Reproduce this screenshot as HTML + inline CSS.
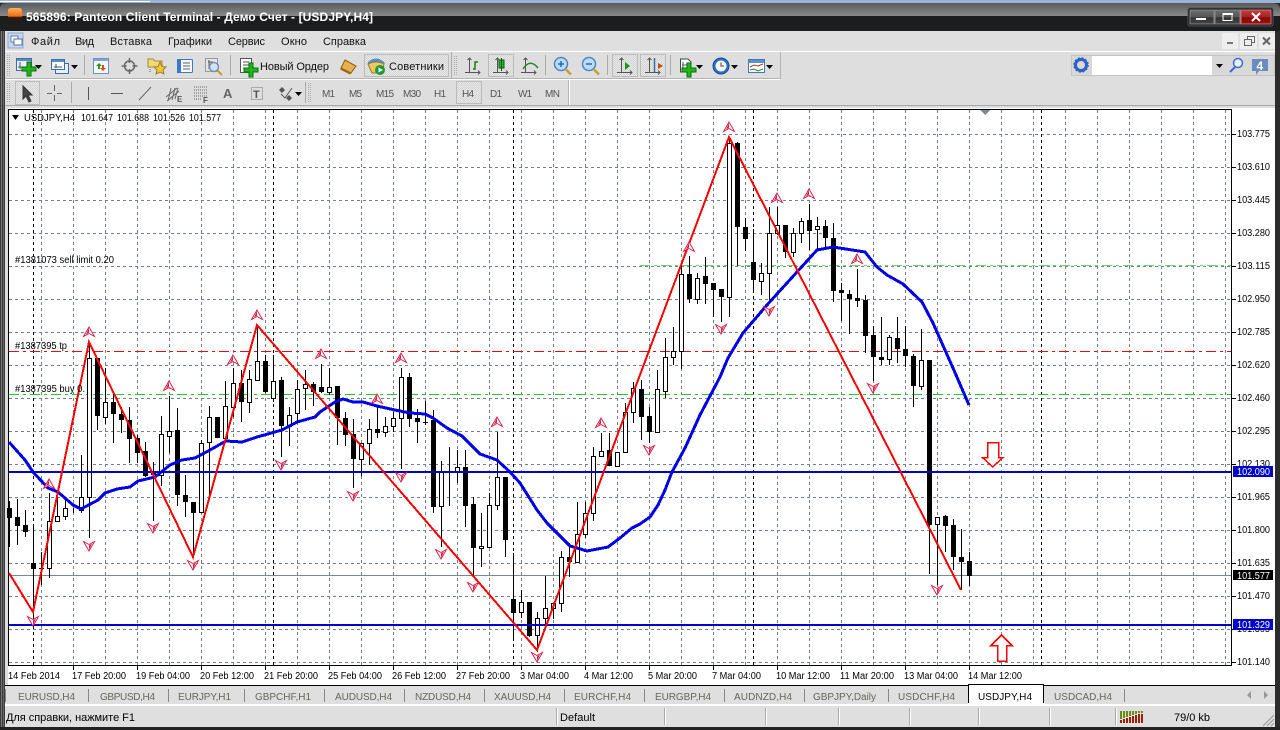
<!DOCTYPE html>
<html lang="ru"><head><meta charset="utf-8"><title>Panteon Client Terminal</title>
<style>
html,body{margin:0;padding:0;background:#000;width:1280px;height:730px;overflow:hidden}
svg{display:block}
text{font-family:"Liberation Sans","Noto Sans CJK JP",sans-serif;font-size:10px;fill:#000}
.m text,text.m{font-size:11px;fill:#111}
.t text{fill:#666659;font-size:10px}
.p text{fill:#555;font-size:10px}
.c{shape-rendering:crispEdges}
</style></head><body>
<svg xmlns="http://www.w3.org/2000/svg" width="1280" height="730" viewBox="0 0 1280 730">
<defs>
<linearGradient id="tg" x1="0" y1="0" x2="0" y2="1"><stop offset="0" stop-color="#5a5a5a"/><stop offset="1" stop-color="#8a8a8a"/></linearGradient>
<linearGradient id="bb" x1="0" y1="0" x2="0" y2="1"><stop offset="0" stop-color="#6e6e6e"/><stop offset=".5" stop-color="#555"/><stop offset=".55" stop-color="#333"/><stop offset="1" stop-color="#444"/></linearGradient>
<linearGradient id="rb" x1="0" y1="0" x2="0" y2="1"><stop offset="0" stop-color="#c04040"/><stop offset=".5" stop-color="#a82020"/><stop offset=".55" stop-color="#860808"/><stop offset="1" stop-color="#a01010"/></linearGradient>
<linearGradient id="oi" x1="0" y1="0" x2="0" y2="1"><stop offset="0" stop-color="#f8b060"/><stop offset=".55" stop-color="#f07010"/><stop offset=".6" stop-color="#3a2010"/><stop offset="1" stop-color="#1a1a1a"/></linearGradient>
<pattern id="pr" width="2" height="2" patternUnits="userSpaceOnUse"><rect width="2" height="2" fill="#e8e8e8"/><rect width="1" height="1" fill="#d4d4d4"/><rect x="1" y="1" width="1" height="1" fill="#d4d4d4"/></pattern>
<g id="u"><path d="M0-5L-5.500 4.500L0 1.500L5.500 4.500Z" fill="#fff" stroke="#dc143c" stroke-width=".9"/><path d="M0-4L-3 2.500L0 .5Z" fill="#dc143c"/></g>
<g id="d"><path d="M0 5L-5.500-4.500L0-1.500L5.500-4.500Z" fill="#fff" stroke="#dc143c" stroke-width=".9"/><path d="M0 4L0-.5L3-2.500Z" fill="#dc143c"/></g>
<path id="plus" d="M-2-7H2V-2H7V2H2V7H-2V2H-7V-2H-2Z" fill="#22b522" stroke="#0a6e0a" stroke-width="1"/>
<path id="ar" d="M0 0H7L3.500 4Z" fill="#000"/>
</defs>
<!-- desktop + frame -->
<rect width="1280" height="730" fill="#2a2a2a"/>
<rect width="1280" height="3" fill="#9ab4d6"/>
<rect x="0" y="1" width="150" height="1" fill="#fff"/>
<path d="M0 16V8Q0 3 7 3H1272Q1280 3 1280 10V16Z" fill="url(#tg)"/>
<rect y="16" width="1280" height="15" fill="#1c1d1f"/>
<rect x="0" y="31" width="5" height="699" fill="#3a3a3a"/>
<rect x="1" y="31" width="1" height="699" fill="#777"/>
<rect x="3" y="31" width="1" height="699" fill="#666"/>
<rect x="1275" y="31" width="5" height="699" fill="#2c2c2c"/>
<!-- title -->
<path d="M8 10Q8 8 12 8H19Q22 8 22 11V20Q22 23 19 23H11Q8 23 8 20Z" fill="url(#oi)"/>
<text x="26" y="21" textLength="347" lengthAdjust="spacing" style="font-size:12px;font-weight:bold;fill:#fff">565896: Panteon Client Terminal - Демо Счет - [USDJPY,H4]</text>
<!-- title buttons -->
<g class="c">
<rect x="1188" y="8" width="85" height="18" rx="2" fill="#111" stroke="#555"/>
<rect x="1190" y="10" width="24" height="14" fill="url(#bb)" stroke="#888"/>
<rect x="1215" y="10" width="25" height="14" fill="url(#bb)" stroke="#888"/>
<rect x="1241" y="10" width="30" height="14" fill="url(#rb)" stroke="#c77"/>
<rect x="1196" y="18" width="10" height="2" fill="#fff"/>
<rect x="1223" y="13.500" width="9" height="7" fill="none" stroke="#fff"/><rect x="1223" y="13" width="10" height="2" fill="#fff"/>
</g>
<path d="M1252 13L1260 21M1260 13L1252 21" stroke="#fff" stroke-width="2"/>
<!-- menu -->
<rect x="5" y="31" width="1270" height="20" fill="#dfdfdf"/>
<rect x="8" y="33" width="15" height="15" fill="#c9d6ee" stroke="#8ea6cc"/>
<rect x="11" y="36" width="7" height="6" fill="#fff" stroke="#5b7fb8"/><rect x="14" y="39" width="8" height="6" fill="#fff" stroke="#4a70a8"/>
<g class="m">
<text x="31" y="45" textLength="29">Файл</text>
<text x="75" y="45" textLength="19">Вид</text>
<text x="110" y="45" textLength="42">Вставка</text>
<text x="168" y="45" textLength="44">Графики</text>
<text x="228" y="45" textLength="37">Сервис</text>
<text x="281" y="45" textLength="26">Окно</text>
<text x="323" y="45" textLength="43">Справка</text>
</g>
<g class="c">
<rect x="1222" y="33" width="16" height="16" fill="#eee"/><rect x="1240" y="33" width="17" height="16" fill="#eee"/><rect x="1259" y="33" width="16" height="16" fill="#eee"/>
<rect x="1227" y="42" width="6" height="2" fill="#777"/>
<rect x="1244.500" y="39.500" width="7" height="6" fill="none" stroke="#666"/><path d="M1247.500 39.500V36.500H1254.500V42.500H1251.500" fill="none" stroke="#666"/>
</g>
<path d="M1263 37.500L1270 44.500M1270 37.500L1263 44.500" stroke="#666" stroke-width="2"/>
<!-- toolbar rows -->
<g class="c">
<rect x="5" y="51" width="1270" height="56" fill="#dedede"/>
<rect x="5" y="51" width="1270" height="1" fill="#fff"/>
<path d="M5 78.500H780M780.500 52V79" stroke="#b4b4b4" fill="none"/>
<rect x="781" y="52" width="494" height="1" fill="#dedede"/>
<rect x="5" y="79" width="775" height="1" fill="#fff"/>
<path d="M568.500 80V105" stroke="#b4b4b4"/><path d="M569.500 80V105" stroke="#fff"/>
<rect x="5" y="105" width="1270" height="1" fill="#a8a8a8"/>
<rect x="5" y="106" width="1270" height="2" fill="#dedede"/>
<path d="M7.500 55V76M9.500 55V76M7.500 83V103M9.500 83V103" stroke="#aaa" stroke-dasharray="1 1"/>
<path d="M84.500 55V75M230.500 55V75M451.500 52V78M545.500 55V75M607.500 55V75M670.500 55V75M71.500 82V103M305.500 82V103" stroke="#aaa"/>
<path d="M454.500 56V75M456.500 56V75M308.500 83V103M310.500 83V103" stroke="#aaa" stroke-dasharray="1 1"/>
<!-- pressed -->
<rect x="364.500" y="54.500" width="84" height="22" fill="url(#pr)" stroke="#bbb"/>
<rect x="488.500" y="54.500" width="25" height="22" fill="url(#pr)" stroke="#bbb"/>
<rect x="612.500" y="54.500" width="25" height="22" fill="url(#pr)" stroke="#bbb"/>
<rect x="640.500" y="54.500" width="25" height="22" fill="url(#pr)" stroke="#bbb"/>
<rect x="15.500" y="81.500" width="24" height="23" fill="url(#pr)" stroke="#bbb"/>
<rect x="456.500" y="81.500" width="25" height="22" fill="url(#pr)" stroke="#bbb"/>
</g>
<!-- toolbar 1 icons -->
<rect x="16.500" y="58.500" width="15" height="12" fill="#e8f0fb" stroke="#3a6ea8"/><rect x="17" y="59" width="14" height="2" fill="#5a8ac8"/>
<path d="M20 62V69M18 67H29" stroke="#555" fill="none"/>
<use href="#plus" x="29" y="69"/><use href="#ar" x="35" y="65"/>
<rect x="55.500" y="63.500" width="13" height="10" fill="#e8f0fb" stroke="#3a6ea8"/>
<rect x="51.500" y="59.500" width="13" height="10" fill="#f4f8ff" stroke="#3a6ea8"/><rect x="52" y="60" width="12" height="2" fill="#5a8ac8"/>
<path d="M54 67H62M56 64V68" stroke="#555" fill="none"/><use href="#ar" x="71" y="65"/>
<rect x="93.500" y="58.500" width="15" height="15" fill="#f6f6f6" stroke="#6b93c4"/><rect x="94" y="59" width="14" height="2" fill="#7ba4d8"/>
<path d="M99 63L96 66H98V69H100V66H102Z" fill="#2a9a2a"/><path d="M103 71L100 68H102V65H104V68H106Z" fill="#d8501a"/>
<circle cx="129.500" cy="66" r="5" fill="none" stroke="#666" stroke-width="1.500"/><path d="M129.500 58V63M129.500 69V74M121.500 66H126.500M132.500 66H137.500" stroke="#666" stroke-width="1.500"/>
<path d="M148 59H153L155 61H162V67H148Z" fill="#f2d878" stroke="#a88a30"/><path d="M160 62L162 66.500L166 67L163 70L164 74L160 72L156 74L157 70L154 67L158 66.500Z" fill="#f0c840" stroke="#a08020"/>
<path d="M150 69V73" stroke="#555" stroke-dasharray="1 1"/>
<rect x="177.500" y="59.500" width="15" height="13" rx="1" fill="#f4f7ff" stroke="#4478b8" stroke-width="1"/><rect x="177" y="59" width="4" height="14" fill="#3a78c8"/><path d="M183 63H190M183 66H190M183 69H190" stroke="#666"/>
<rect x="205.500" y="58.500" width="12" height="13" fill="#e6e6e6" stroke="#999"/><path d="M209 60V69M208 62H213" stroke="#555" fill="none"/>
<circle cx="214" cy="67" r="4.500" fill="#cfe4f8" stroke="#7a90a8" stroke-width="1.500"/><path d="M217.500 70.500L222 75" stroke="#c89a30" stroke-width="2"/>
<rect x="240.500" y="58.500" width="11" height="14" fill="#fff" stroke="#555"/><path d="M243 62H249M243 65H249M243 68H247" stroke="#555"/><use href="#plus" x="251" y="70"/>
<text class="m" x="260" y="70" textLength="69">Новый Ордер</text>
<path d="M345 60L356 66L351 73L341 68Z" fill="#e8b050" stroke="#8a5a10"/><path d="M341 68L351 73L350 74.500L340 69.500Z" fill="#a06818"/>
<path d="M368 62Q376 55 384 62L385 64Q376 60 368 64Z" fill="#4a90d8"/><path d="M368 64Q376 60 384 64L382 73H372Z" fill="#f0c860" stroke="#9a7a20"/><circle cx="380" cy="70" r="5" fill="#1a9a3a"/><path d="M378.500 67.500L383 70L378.500 72.500Z" fill="#fff"/>
<text class="m" x="389" y="70" textLength="55">Советники</text>
<g fill="none" stroke="#555">
<path d="M469.500 58V73M465 72.500H480M467.500 60L469.500 58L471.500 60M478 70.500L480 72.500L478 74.500"/>
<path d="M497.500 58V73M493 72.500H508M495.500 60L497.500 58L499.500 60M506 70.500L508 72.500L506 74.500"/>
<path d="M525.500 58V73M521 72.500H536M523.500 60L525.500 58L527.500 60M534 70.500L536 72.500L534 74.500"/>
<path d="M621.500 58V73M617 72.500H632M619.500 60L621.500 58L623.500 60M630 70.500L632 72.500L630 74.500"/>
<path d="M649.500 58V73M645 72.500H660M647.500 60L649.500 58L651.500 60M658 70.500L660 72.500L658 74.500"/>
</g>
<path d="M473 69H475V62H478" stroke="#1a7a1a" fill="none" stroke-width="1.500"/>
<rect x="499" y="60" width="5" height="8" fill="#2ab82a" stroke="#0a5a0a"/><path d="M501.500 58V71" stroke="#0a5a0a"/>
<path d="M523 69Q530 58 538 68" stroke="#2a8a2a" fill="none" stroke-width="1.500"/>
<path d="M625 62L630 66L625 70Z" fill="#1a9a1a"/>
<path d="M654.500 58V72" stroke="#3a6ea8" stroke-width="1.500"/><path d="M663 66L658 63V69Z" fill="#c84a10"/>
<circle cx="561" cy="64" r="6.500" fill="#bcdcf6" stroke="#4a86c8" stroke-width="1.500"/><path d="M565.500 69L571 74.500" stroke="#c8a030" stroke-width="2.500"/><path d="M558 64H564M561 61V67" stroke="#2a68b0" stroke-width="1.500"/>
<circle cx="589" cy="64" r="6.500" fill="#bcdcf6" stroke="#4a86c8" stroke-width="1.500"/><path d="M593.500 69L599 74.500" stroke="#c8a030" stroke-width="2.500"/><path d="M586 64H592" stroke="#2a68b0" stroke-width="1.500"/>
<path d="M680.500 59H688L691 62V72H680.500Z" fill="#fff" stroke="#444"/><path d="M683 62V69M682 65H688" stroke="#555"/><use href="#plus" x="689" y="70"/><use href="#ar" x="696" y="65"/>
<circle cx="721" cy="66" r="8" fill="#2a6ec8" stroke="#1a4a90"/><circle cx="721" cy="66" r="5.500" fill="#f4f4f4"/><path d="M721 62.500V66H724" stroke="#444" fill="none"/><use href="#ar" x="731" y="65"/>
<rect x="748.500" y="59.500" width="16" height="13" fill="#fff" stroke="#4478b8"/><rect x="749" y="60" width="15" height="3" fill="#5a90d0"/><path d="M750 67L754 65L758 66L763 64" stroke="#a83a1a" fill="none"/><path d="M750 70L754 69L758 71L763 69" stroke="#2a8a2a" fill="none"/><use href="#ar" x="766" y="65"/>
<!-- right search -->
<g class="c">
<rect x="1071.500" y="55.500" width="203" height="20" fill="#d8d8d8" stroke="#c4c4c4"/>
<rect x="1092" y="56" width="120" height="19" fill="#fff"/>
</g>
<circle cx="1081" cy="65" r="5.500" fill="none" stroke="#2a62c8" stroke-width="3"/><circle cx="1081" cy="65" r="7" fill="none" stroke="#2a62c8" stroke-width="1.500" stroke-dasharray="2 1.700"/>
<use href="#ar" x="1216" y="64"/>
<circle cx="1238" cy="63" r="4.500" fill="#e8f0fb" stroke="#3a6ec8" stroke-width="1.500"/><path d="M1235 67L1230 72" stroke="#3a6ec8" stroke-width="2"/>
<path d="M1252 59H1268V71H1259L1256 75V71H1252Z" fill="#6a8cc0"/><text x="1256.500" y="70" style="font-size:12px;font-weight:bold;fill:#fff">4</text>
<!-- toolbar 2 icons -->
<path d="M23 86V99L26 96L29 102L31 101L28 95H32Z" fill="#444" stroke="#333"/>
<g fill="none" stroke="#666" class="c"><path d="M54.500 85V91M54.500 95V101M47 93.500H52M57 93.500H62"/><path d="M88.500 87V100" stroke="#555"/><path d="M111 93.500H123" stroke="#555"/></g>
<path d="M139 100L151 87" stroke="#666" fill="none"/>
<path d="M166 97L177 88M167 101L179 91M171 88L168 101M175 88L172 100M178 88L175 99" stroke="#666" fill="none"/>
<text x="177" y="102" style="font-size:8px;font-weight:bold;fill:#555">E</text>
<path d="M194 87H207M194 90H207M194 93H207M194 96H207M194 99H201" stroke="#666" stroke-dasharray="1 1" fill="none"/>
<text x="203" y="103" style="font-size:8px;font-weight:bold;fill:#555">F</text>
<text x="223" y="98" style="font-size:13px;font-weight:bold;fill:#666">A</text>
<rect x="251.500" y="87.500" width="11" height="12" fill="none" stroke="#777" stroke-dasharray="1 1"/><text x="253" y="98" style="font-size:11px;font-weight:bold;fill:#555">T</text>
<path d="M282 87L285 90L282 93L279 90ZM289 95L292 98L289 101L286 98Z" fill="#555"/><path d="M281 94L285 98L292 88" stroke="#555" fill="none"/><use href="#ar" x="295" y="92"/>
<g class="p">
<text x="322" y="97" textLength="13">M1</text><text x="349" y="97" textLength="13">M5</text><text x="376" y="97" textLength="18">M15</text><text x="403" y="97" textLength="18">M30</text><text x="434" y="97" textLength="12">H1</text><text x="462" y="97" textLength="12">H4</text><text x="490" y="97" textLength="12">D1</text><text x="518" y="97" textLength="14">W1</text><text x="545" y="97" textLength="15">MN</text>
</g>
<!-- chart bg -->
<g class="c">
<rect x="5" y="107" width="3" height="578" fill="#dedede"/>
<rect x="8" y="108" width="1267" height="577" fill="#fff"/>
<path d="M8 109.500H1232M8.500 109V666M8 665.500H1232M1231.500 109V666" stroke="#000" fill="none"/>
<path d="M9 134.500H1231M9 167.500H1231M9 200.500H1231M9 233.500H1231M9 266.500H1231M9 299.500H1231M9 332.500H1231M9 365.500H1231M9 398.500H1231M9 431.500H1231M9 464.500H1231M9 497.500H1231M9 530.500H1231M9 563.500H1231M9 596.500H1231M9 629.500H1231M9 662.500H1231" stroke="#708090" stroke-dasharray="3 3" fill="none"/>
<path d="M41.500 110V665M73.500 110V665M105.500 110V665M137.500 110V665M169.500 110V665M201.500 110V665M233.500 110V665M265.500 110V665M297.500 110V665M329.500 110V665M361.500 110V665M393.500 110V665M425.500 110V665M457.500 110V665M489.500 110V665M521.500 110V665M553.500 110V665M585.500 110V665M617.500 110V665M649.500 110V665M681.500 110V665M713.500 110V665M745.500 110V665M777.500 110V665M809.500 110V665M841.500 110V665M873.500 110V665M905.500 110V665M937.500 110V665M969.500 110V665M1001.500 110V665M1033.500 110V665M1065.500 110V665M1097.500 110V665M1129.500 110V665M1161.500 110V665M1193.500 110V665M1225.500 110V665" stroke="#708090" stroke-dasharray="3 3" fill="none"/>
<path d="M33.500 110V665M273.500 110V665M513.500 110V665M753.500 110V665M1041.500 110V665" stroke="#000" stroke-dasharray="3 3" fill="none"/>
<path d="M1232 134.500H1236M1232 167.500H1236M1232 200.500H1236M1232 233.500H1236M1232 266.500H1236M1232 299.500H1236M1232 332.500H1236M1232 365.500H1236M1232 398.500H1236M1232 431.500H1236M1232 464.500H1236M1232 497.500H1236M1232 530.500H1236M1232 563.500H1236M1232 596.500H1236M1232 629.500H1236M1232 662.500H1236" stroke="#000"/>
<path d="M73.500 666V670M137.500 666V670M201.500 666V670M265.500 666V670M329.500 666V670M393.500 666V670M457.500 666V670M521.500 666V670M585.500 666V670M649.500 666V670M713.500 666V670M777.500 666V670M841.500 666V670M905.500 666V670M969.500 666V670" stroke="#000"/>
<path d="M9 351.500H1231" stroke="#e01010" stroke-dasharray="10 4 3 4"/>
<path d="M9 394.500H1231" stroke="#22cc22" stroke-dasharray="10 4 3 4"/>
<path d="M640 265.500H1231" stroke="#22cc22" stroke-dasharray="10 4 3 4" opacity=".7"/>
<path d="M9 575.500H1231" stroke="#778899"/>
<path d="M980 110H990L985 115Z" fill="#778899"/>
<!-- wicks -->
<path stroke="#000" fill="none" d="M9.500 501V547M17.500 499V545M25.500 510V537M33.500 527V620M41.500 552V585M49.500 493V578M57.500 497V522M65.500 497V520M73.500 508V513M81.500 455V513M89.500 342V538M97.500 358V430M105.500 368V424M113.500 392V443M121.500 407V433M129.500 407V463M137.500 435V463M145.500 442V477M153.500 462V521M161.500 416V486M169.500 396V453M177.500 408V506M185.500 475V517M193.500 502V557M201.500 440V512M209.500 406V495M217.500 417V438M225.500 381V442M233.500 368V417M241.500 370V422M249.500 370V413M257.500 325V380M265.500 355V393M273.500 355V402M281.500 377V457M289.500 407V446M297.500 380V422M305.500 370V410M313.500 382V406M321.500 364V393M329.500 368V395M337.500 386V445M345.500 412V446M353.500 419V488M361.500 443V476M369.500 419V465M377.500 405V438M385.500 417V437M393.500 412V432M401.500 368V469M409.500 373V427M417.500 409V443M425.500 401V425M433.500 410V513M441.500 461V547M449.500 447V506M457.500 450V483M465.500 450V527M473.500 497V575M481.500 513V567M489.500 493V547M497.500 432V510M505.500 477V557M513.500 553V640M521.500 590V618M529.500 602V637M537.500 612V652M545.500 576V627M553.500 603V619M561.500 551V612M569.500 543V577M577.500 502V562M585.500 502V538M593.500 447V521M601.500 433V456M609.500 433V466M617.500 452V467M625.500 403V453M633.500 382V423M641.500 380V440M649.500 407V443M657.500 370V432M665.500 338V398M673.500 327V365M681.500 265V369M689.500 256V303M697.500 273V304M705.500 257V304M713.500 283V317M721.500 289V322M729.500 138V317M737.500 142V266M745.500 218V251M753.500 229V292M761.500 263V295M769.500 207V301M777.500 207V235M785.500 225V258M793.500 228V257M801.500 218V243M809.500 204V250M817.500 217V249M825.500 220V247M833.500 223V302M841.500 283V321M849.500 290V334M857.500 269V307M865.500 295V353M873.500 326V381M881.500 317V365M889.500 335V365M897.500 317V363M905.500 326V367M913.500 354V407M921.500 329V390M929.500 360V574M937.500 517V585M945.500 515V552M953.500 519V570M961.500 529V590M969.500 552V586"/>
<!-- white bodies -->
<path fill="#fff" stroke="#000" d="M47.500 521.500h4V568.500h-4zM55.500 516.500h4V521.500h-4zM63.500 508.500h4V516.500h-4zM79.500 497.500h4V510.500h-4zM87.500 358.500h4V497.500h-4zM103.500 402.500h4V417.500h-4zM159.500 434.500h4V475.500h-4zM167.500 431.500h4V436.500h-4zM199.500 443.500h4V512.500h-4zM207.500 417.500h4V442.500h-4zM223.500 406.500h4V438.500h-4zM231.500 383.500h4V407.500h-4zM247.500 379.500h4V402.500h-4zM255.500 361.500h4V380.500h-4zM271.500 381.500h4V398.500h-4zM287.500 415.500h4V426.500h-4zM295.500 389.500h4V413.500h-4zM303.500 384.500h4V388.500h-4zM327.500 387.500h4V392.500h-4zM359.500 443.500h4V459.500h-4zM367.500 429.500h4V443.500h-4zM383.500 426.500h4V432.500h-4zM391.500 418.500h4V426.500h-4zM399.500 377.500h4V418.500h-4zM439.500 472.500h4V506.500h-4zM455.500 467.500h4V471.500h-4zM479.500 546.500h4V548.500h-4zM487.500 505.500h4V547.500h-4zM495.500 477.500h4V505.500h-4zM519.500 602.500h4V612.500h-4zM535.500 618.500h4V635.500h-4zM543.500 608.500h4V618.500h-4zM551.500 603.500h4V608.500h-4zM559.500 557.500h4V603.500h-4zM575.500 534.500h4V562.500h-4zM583.500 513.500h4V534.500h-4zM591.500 456.500h4V513.500h-4zM599.500 451.500h4V456.500h-4zM615.500 452.500h4V466.500h-4zM623.500 412.500h4V452.500h-4zM631.500 388.500h4V412.500h-4zM655.500 389.500h4V432.500h-4zM663.500 357.500h4V391.500h-4zM671.500 351.500h4V357.500h-4zM679.500 274.500h4V351.500h-4zM695.500 278.500h4V299.500h-4zM727.500 143.500h4V297.500h-4zM759.500 273.500h4V281.500h-4zM767.500 233.500h4V273.500h-4zM775.500 225.500h4V233.500h-4zM791.500 233.500h4V252.500h-4zM799.500 221.500h4V233.500h-4zM815.500 226.500h4V229.500h-4zM887.500 337.500h4V359.500h-4zM919.500 360.500h4V386.500h-4zM935.500 517.500h4V524.500h-4z"/>
<!-- black bodies -->
<path fill="#000" d="M7 508h5V518h-5zM15 517h5V526h-5zM23 525h5V532h-5zM31 563h5V569h-5zM39 568h5V569h-5zM95 358h5V416h-5zM111 402h5V414h-5zM119 414h5V420h-5zM127 420h5V439h-5zM135 438h5V453h-5zM143 451h5V476h-5zM151 472h5V475h-5zM175 430h5V495h-5zM183 495h5V502h-5zM191 502h5V513h-5zM215 417h5V438h-5zM239 383h5V402h-5zM263 361h5V392h-5zM279 380h5V426h-5zM311 384h5V392h-5zM319 387h5V392h-5zM335 386h5V418h-5zM343 418h5V435h-5zM351 434h5V459h-5zM375 429h5V433h-5zM407 377h5V419h-5zM415 418h5V422h-5zM423 422h5V423h-5zM431 420h5V507h-5zM463 467h5V506h-5zM471 504h5V548h-5zM503 477h5V540h-5zM511 599h5V613h-5zM527 602h5V636h-5zM567 557h5V562h-5zM607 450h5V466h-5zM639 389h5V417h-5zM647 416h5V432h-5zM687 274h5V299h-5zM703 276h5V284h-5zM711 283h5V290h-5zM719 289h5V297h-5zM735 143h5V227h-5zM743 227h5V239h-5zM751 262h5V280h-5zM783 225h5V252h-5zM807 220h5V231h-5zM823 226h5V238h-5zM831 238h5V291h-5zM839 290h5V293h-5zM847 294h5V299h-5zM855 298h5V301h-5zM863 300h5V336h-5zM871 335h5V357h-5zM879 357h5V360h-5zM895 338h5V349h-5zM903 349h5V356h-5zM911 356h5V386h-5zM927 360h5V525h-5zM943 516h5V526h-5zM951 525h5V557h-5zM959 557h5V562h-5zM967 561h5V576h-5z"/>
<!-- horizontal blue -->
<rect x="9" y="471" width="1222" height="2" fill="#0000cd"/>
<rect x="9" y="624" width="1222" height="2" fill="#0000cd"/>
<!-- arrows big -->
<path d="M987.500 442.500H998.500V457.500H1003L992.700 467L982.500 457.500H987.500Z" fill="#fff" stroke="#f00" stroke-width="1.500"/>
<path d="M997.500 661H1006.500V645.500H1012L1001.500 635L991 645.500H997.500Z" fill="#fff" stroke="#f00" stroke-width="1.500"/>
<!-- MA -->
<path fill="none" stroke="#0000e6" stroke-width="3" stroke-linejoin="round" d="M9 442L25 460L33 472L48 488L58 492L73 505L81 509L98 500L105 493L117 489L130 487L138 481L155 477L170 465L182 460L195 458L210 450L226 441L242 442L257 437L282 430L297 422L315 417L320 412L335 402L343 399L353 402L363 402L377 406L395 410L410 413L425 414L433 418L447 428L462 436L480 454L497 460L510 472L520 483L537 510L547 523L570 546L587 551L608 547L620 538L632 528L640 524L650 517L658 505L665 490L672 472L685 448L700 415L720 377L728 358L743 333L767 305L787 283L797 272L817 250L833 247L865 252L877 267L887 275L903 284L922 302L933 323L953 368L969 405"/>
<!-- zigzag -->
<path fill="none" stroke="#f00" stroke-width="2" stroke-linejoin="miter" d="M9 573L33 612L89 342L193 557L257 325L537 650L729 137L961 590"/>
</g>
<!-- fractals -->
<use href="#u" x="89" y="332"/><use href="#u" x="49" y="484"/><use href="#u" x="169" y="386"/><use href="#u" x="233" y="360"/><use href="#u" x="257" y="315"/><use href="#u" x="321" y="354"/><use href="#u" x="401" y="358"/><use href="#u" x="377" y="399"/><use href="#u" x="497" y="422"/><use href="#u" x="601" y="423"/><use href="#u" x="729" y="127"/><use href="#u" x="689" y="247"/><use href="#u" x="777" y="198"/><use href="#u" x="809" y="194"/><use href="#u" x="857" y="259"/>
<use href="#d" x="33" y="621"/><use href="#d" x="89" y="546"/><use href="#d" x="153" y="528"/><use href="#d" x="193" y="565"/><use href="#d" x="281" y="465"/><use href="#d" x="353" y="496"/><use href="#d" x="401" y="477"/><use href="#d" x="441" y="554"/><use href="#d" x="473" y="587"/><use href="#d" x="537" y="657"/><use href="#d" x="649" y="450"/><use href="#d" x="721" y="329"/><use href="#d" x="769" y="311"/><use href="#d" x="873" y="388"/><use href="#d" x="937" y="590"/>
<!-- chart header -->
<path d="M12 115H19L15.500 120Z" fill="#000"/>
<text x="24" y="121" textLength="51" lengthAdjust="spacingAndGlyphs">USDJPY,H4</text>
<text x="81" y="121" textLength="32" lengthAdjust="spacingAndGlyphs">101.647</text><text x="117" y="121" textLength="32" lengthAdjust="spacingAndGlyphs">101.688</text><text x="153" y="121" textLength="32" lengthAdjust="spacingAndGlyphs">101.526</text><text x="189" y="121" textLength="32" lengthAdjust="spacingAndGlyphs">101.577</text>
<text x="15" y="263" textLength="99" lengthAdjust="spacingAndGlyphs">#1381073 sell limit 0.20</text>
<text x="15" y="349" textLength="52" lengthAdjust="spacingAndGlyphs">#1387395 tp</text>
<text x="15" y="392" textLength="70" lengthAdjust="spacingAndGlyphs">#1387395 buy 0.</text>
<!-- price axis -->
<g>
<text x="1237" y="137" textLength="33" lengthAdjust="spacingAndGlyphs">103.775</text><text x="1237" y="170" textLength="33" lengthAdjust="spacingAndGlyphs">103.610</text><text x="1237" y="203" textLength="33" lengthAdjust="spacingAndGlyphs">103.445</text><text x="1237" y="236" textLength="33" lengthAdjust="spacingAndGlyphs">103.280</text><text x="1237" y="269" textLength="33" lengthAdjust="spacingAndGlyphs">103.115</text><text x="1237" y="302" textLength="33" lengthAdjust="spacingAndGlyphs">102.950</text><text x="1237" y="335" textLength="33" lengthAdjust="spacingAndGlyphs">102.785</text><text x="1237" y="368" textLength="33" lengthAdjust="spacingAndGlyphs">102.620</text><text x="1237" y="401" textLength="33" lengthAdjust="spacingAndGlyphs">102.460</text><text x="1237" y="434" textLength="33" lengthAdjust="spacingAndGlyphs">102.295</text><text x="1237" y="467" textLength="33" lengthAdjust="spacingAndGlyphs">102.130</text><text x="1237" y="500" textLength="33" lengthAdjust="spacingAndGlyphs">101.965</text><text x="1237" y="533" textLength="33" lengthAdjust="spacingAndGlyphs">101.800</text><text x="1237" y="566" textLength="33" lengthAdjust="spacingAndGlyphs">101.635</text><text x="1237" y="599" textLength="33" lengthAdjust="spacingAndGlyphs">101.470</text><text x="1237" y="632" textLength="33" lengthAdjust="spacingAndGlyphs">101.305</text><text x="1237" y="665" textLength="33" lengthAdjust="spacingAndGlyphs">101.140</text>
</g>
<rect x="1233" y="466" width="40" height="11" fill="#0000cd" class="c"/><text x="1237" y="475" textLength="33" lengthAdjust="spacingAndGlyphs" style="fill:#fff">102.090</text>
<rect x="1233" y="570" width="40" height="10" fill="#000" class="c"/><text x="1237" y="579" textLength="33" lengthAdjust="spacingAndGlyphs" style="fill:#fff">101.577</text>
<rect x="1233" y="619" width="40" height="11" fill="#0000cd" class="c"/><text x="1237" y="628" textLength="33" lengthAdjust="spacingAndGlyphs" style="fill:#fff">101.329</text>
<!-- time axis -->
<g>
<text x="8" y="679" textLength="52" lengthAdjust="spacingAndGlyphs">14 Feb 2014</text><text x="72" y="679" textLength="54" lengthAdjust="spacingAndGlyphs">17 Feb 20:00</text><text x="136" y="679" textLength="54" lengthAdjust="spacingAndGlyphs">19 Feb 04:00</text><text x="200" y="679" textLength="54" lengthAdjust="spacingAndGlyphs">20 Feb 12:00</text><text x="264" y="679" textLength="54" lengthAdjust="spacingAndGlyphs">21 Feb 20:00</text><text x="328" y="679" textLength="54" lengthAdjust="spacingAndGlyphs">25 Feb 04:00</text><text x="392" y="679" textLength="54" lengthAdjust="spacingAndGlyphs">26 Feb 12:00</text><text x="456" y="679" textLength="54" lengthAdjust="spacingAndGlyphs">27 Feb 20:00</text><text x="520" y="679" textLength="49" lengthAdjust="spacingAndGlyphs">3 Mar 04:00</text><text x="584" y="679" textLength="49" lengthAdjust="spacingAndGlyphs">4 Mar 12:00</text><text x="648" y="679" textLength="49" lengthAdjust="spacingAndGlyphs">5 Mar 20:00</text><text x="712" y="679" textLength="49" lengthAdjust="spacingAndGlyphs">7 Mar 04:00</text><text x="776" y="679" textLength="54" lengthAdjust="spacingAndGlyphs">10 Mar 12:00</text><text x="840" y="679" textLength="54" lengthAdjust="spacingAndGlyphs">11 Mar 20:00</text><text x="904" y="679" textLength="54" lengthAdjust="spacingAndGlyphs">13 Mar 04:00</text><text x="968" y="679" textLength="54" lengthAdjust="spacingAndGlyphs">14 Mar 12:00</text>
</g>
<!-- tabs -->
<g class="c">
<rect x="5" y="685" width="1270" height="1" fill="#000"/>
<rect x="5" y="686" width="1270" height="18" fill="#dfdfdf"/>
<rect x="5" y="704" width="1270" height="2" fill="#fff"/>
<path d="M88.500 689V702M168.500 689V702M244.500 689V702M324.500 689V702M404.500 689V702M484.500 689V702M564.500 689V702M644.500 689V702M724.500 689V702M804.500 689V702M888.500 689V702M1124.500 689V702M5.500 689V702" stroke="#888"/>
<rect x="968.500" y="684.500" width="75" height="19" fill="#fff" stroke="#000"/><rect x="968" y="703" width="77" height="2" fill="#fff"/><path d="M968.500 685V703M1043.500 685V703" stroke="#000"/>
</g>
<g class="t">
<text x="18" y="700" textLength="57">EURUSD,H4</text><text x="100" y="700" textLength="55">GBPUSD,H4</text><text x="178" y="700" textLength="53">EURJPY,H1</text><text x="255" y="700" textLength="56">GBPCHF,H1</text><text x="335" y="700" textLength="57">AUDUSD,H4</text><text x="415" y="700" textLength="56">NZDUSD,H4</text><text x="494" y="700" textLength="57">XAUUSD,H4</text><text x="574" y="700" textLength="57">EURCHF,H4</text><text x="655" y="700" textLength="56">EURGBP,H4</text><text x="734" y="700" textLength="58">AUDNZD,H4</text><text x="813" y="700" textLength="63">GBPJPY,Daily</text><text x="898" y="700" textLength="57">USDCHF,H4</text><text x="978" y="700" textLength="54" style="fill:#000">USDJPY,H4</text><text x="1054" y="700" textLength="58">USDCAD,H4</text>
</g>
<path d="M1251 691V699L1247 695ZM1264 691V699L1268 695Z" fill="#999"/>
<!-- status -->
<g class="c">
<rect x="5" y="706" width="1270" height="21" fill="#dfdfdf"/>
<rect x="0" y="727" width="1280" height="3" fill="#222"/>
<path d="M556.500 708V725M664.500 708V725M765.500 708V725M838.500 708V725M909.500 708V725M978.500 708V725M1049.500 708V725M1115.500 708V725" stroke="#aaa"/>
<path d="M557.500 708V725M665.500 708V725M766.500 708V725M839.500 708V725M910.500 708V725M979.500 708V725M1050.500 708V725M1116.500 708V725" stroke="#fff"/>
<path d="M1120 711h2v8h-2zM1123 711h2v7h-2zM1126 711h2v6h-2zM1129 711h2v5h-2zM1132 711h2v4h-2zM1135 711h2v3h-2zM1138 711h2v2h-2zM1141 711h2v2h-2z" fill="#6b8c10"/>
<path d="M1120 720h2v3h-2zM1123 719h2v4h-2zM1126 718h2v5h-2zM1129 717h2v6h-2zM1132 716h2v7h-2zM1135 715h2v8h-2zM1138 714h2v9h-2zM1141 714h2v9h-2z" fill="#9a2008"/>
</g>
<text class="m" x="6" y="721" textLength="129" style="fill:#000">Для справки, нажмите F1</text>
<text class="m" x="560" y="721" textLength="35" style="fill:#000">Default</text>
<text class="m" x="1174" y="721" textLength="36" style="fill:#000">79/0 kb</text>
<path d="M1263 726L1274 715M1267 726L1274 719M1271 726L1274 723" stroke="#999" fill="none"/>
</svg>
</body></html>
